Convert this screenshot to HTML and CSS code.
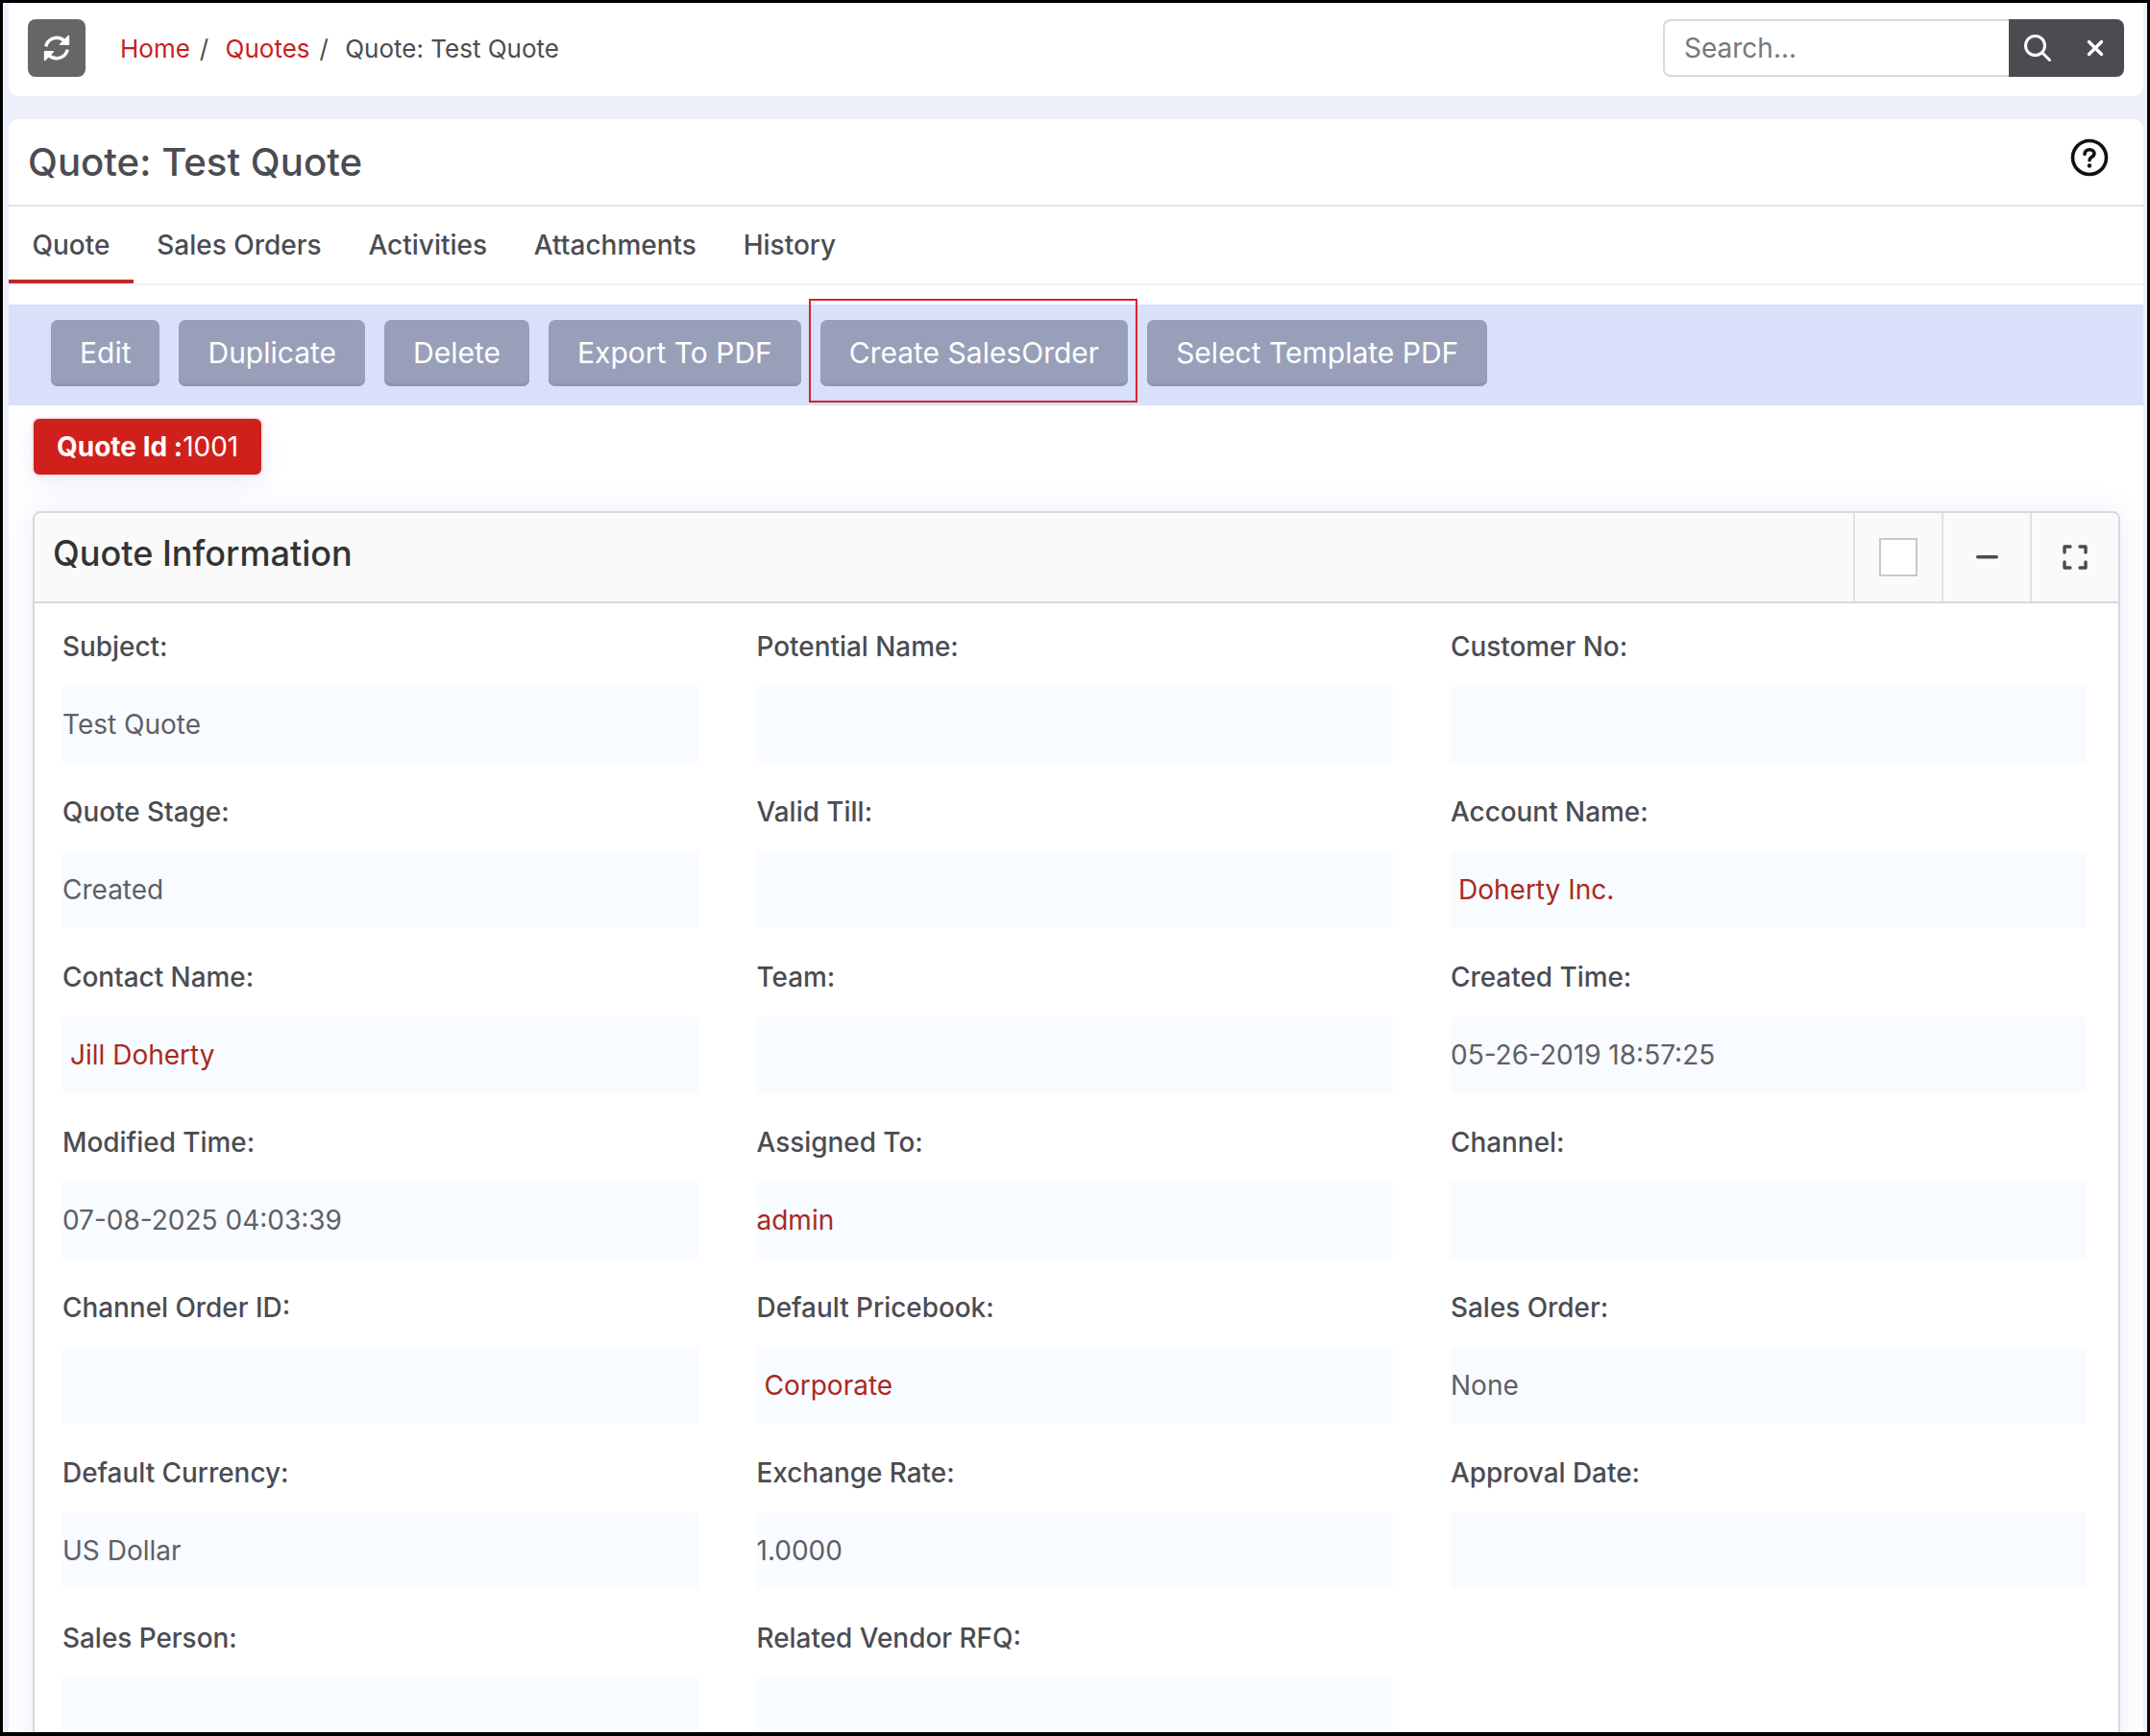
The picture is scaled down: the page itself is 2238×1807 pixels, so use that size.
FILE: index.html
```html
<!DOCTYPE html>
<html lang="en">

<head>
    <meta charset="UTF-8">
    <meta name="viewport" content="width=device-width, initial-scale=1.0">
    <title>Quote: Test Quote</title>
    <link rel="stylesheet" href="styles.css">
</head>

<body>

    <div class="page">
        <div class="topbar">
            <button class="refresh-btn" aria-label="Refresh">
                <svg width="30" height="30" viewBox="0 0 28 28" fill="none" stroke="#fff" stroke-width="3.2"><path d="M3.500 12.500A10.800 10.800 0 0 1 21.500 7"/><path d="M25.500 2.500v8h-8z" fill="#fff" stroke-width="1.600" stroke-linejoin="round"/><path d="M24.500 15.500A10.800 10.800 0 0 1 6.500 21"/><path d="M2.500 25.500v-8h8z" fill="#fff" stroke-width="1.600" stroke-linejoin="round"/></svg>
            </button>
            <nav class="breadcrumb">
                <a href="#">Home</a><span class="sep">/</span>
                <a href="#">Quotes</a><span class="sep">/</span>
                <span class="current">Quote: Test Quote</span>
            </nav>
            <div class="search">
                <input class="search-input" type="text" placeholder="Search...">
                <div class="search-btns">
                    <svg width="28" height="28" viewBox="0 0 28 28" fill="none" stroke="#fff" stroke-width="3" stroke-linecap="round"><circle cx="11.500" cy="11.500" r="10"/><path d="M19 19l7.500 7.500"/></svg>
                    <svg width="18" height="18" viewBox="0 0 18 18" fill="none" stroke="#fff" stroke-width="3.4" stroke-linecap="round"><path d="M2.500 2.500l13 13M15.500 2.500l-13 13"/></svg>
                </div>
            </div>
        </div>

        <div class="main">
            <div class="title-row">
                <h1>Quote: Test Quote</h1>
                <svg class="help" width="40" height="40" viewBox="0 0 40 40" fill="none" stroke="#111" stroke-width="3.6"><circle cx="20" cy="20" r="17.500"/><path d="M15 16.500c0-3 2.200-4.800 5-4.800s5 1.700 5 4.200c0 3.400-5 3.300-5 6.900" stroke-linecap="round"/><circle cx="20" cy="28.500" r="2.200" fill="#111" stroke="none"/></svg>
            </div>

            <div class="tabs">
                <a href="#" class="tab active">Quote</a>
                <a href="#" class="tab">Sales Orders</a>
                <a href="#" class="tab">Activities</a>
                <a href="#" class="tab">Attachments</a>
                <a href="#" class="tab">History</a>
            </div>

            <div class="actions">
                <button class="action-btn">Edit</button>
                <button class="action-btn">Duplicate</button>
                <button class="action-btn">Delete</button>
                <button class="action-btn">Export To PDF</button>
                <button class="action-btn highlighted">Create SalesOrder</button>
                <button class="action-btn">Select Template PDF</button>
            </div>

            <div class="quote-id"><b>Quote Id :</b>1001</div>

            <div class="panel">
                <div class="panel-head">
                    <h2>Quote Information</h2>
                    <div class="panel-tool"><span class="check"></span></div>
                    <div class="panel-tool">
                        <svg width="23" height="4" viewBox="0 0 23 4"><rect width="23" height="3.500" rx="1.750" fill="#4b4c52"/></svg>
                    </div>
                    <div class="panel-tool">
                        <svg width="26" height="26" viewBox="0 0 26 26" fill="none" stroke="#4b4c52" stroke-width="3.400" stroke-linecap="round" stroke-linejoin="round"><path d="M2 8V2h6M18 2h6v6M24 18v6h-6M8 24H2v-6"/></svg>
                    </div>
                </div>
                <div class="fields">
                    <div class="field"><label>Subject:</label><div class="value">Test Quote</div></div>
                    <div class="field"><label>Potential Name:</label><div class="value"></div></div>
                    <div class="field"><label>Customer No:</label><div class="value"></div></div>

                    <div class="field"><label>Quote Stage:</label><div class="value">Created</div></div>
                    <div class="field"><label>Valid Till:</label><div class="value"></div></div>
                    <div class="field"><label>Account Name:</label><div class="value"><a href="#" class="indent">Doherty Inc.</a></div></div>

                    <div class="field"><label>Contact Name:</label><div class="value"><a href="#" class="indent">Jill Doherty</a></div></div>
                    <div class="field"><label>Team:</label><div class="value"></div></div>
                    <div class="field"><label>Created Time:</label><div class="value">05-26-2019 18:57:25</div></div>

                    <div class="field"><label>Modified Time:</label><div class="value">07-08-2025 04:03:39</div></div>
                    <div class="field"><label>Assigned To:</label><div class="value"><a href="#">admin</a></div></div>
                    <div class="field"><label>Channel:</label><div class="value"></div></div>

                    <div class="field"><label>Channel Order ID:</label><div class="value"></div></div>
                    <div class="field"><label>Default Pricebook:</label><div class="value"><a href="#" class="indent">Corporate</a></div></div>
                    <div class="field"><label>Sales Order:</label><div class="value">None</div></div>

                    <div class="field"><label>Default Currency:</label><div class="value">US Dollar</div></div>
                    <div class="field"><label>Exchange Rate:</label><div class="value">1.0000</div></div>
                    <div class="field"><label>Approval Date:</label><div class="value"></div></div>

                    <div class="field"><label>Sales Person:</label><div class="value"></div></div>
                    <div class="field"><label>Related Vendor RFQ:</label><div class="value"></div></div>
                </div>
            </div>
        </div>
    </div>

</body>

</html>
```

FILE: styles.css
```css
html, body {
    margin: 0;
    height: 100%;
}

body {
    width: 2238px;
    height: 1807px;
    box-sizing: border-box;
    border: solid #000;
    border-width: 3px 3px 4px;
    overflow: hidden;
    font-family: Inter, "Noto Sans", sans-serif;
    font-size: 28px;
    color: #4b4c52;
}

a {
    text-decoration: none;
}

.page {
    height: 100%;
    padding: 0 4px 0 6px;
    background-color: #edf0fb;
    overflow: hidden;
}

/* top bar */
.topbar {
    display: flex;
    align-items: center;
    height: 97px;
    box-sizing: border-box;
    padding: 17px 20px 20px 20px;
    margin-bottom: 24px;
    background-color: #fff;
    border-radius: 0 0 10px 10px;
}

.refresh-btn {
    display: flex;
    align-items: center;
    justify-content: center;
    width: 60px;
    height: 60px;
    padding: 0;
    border: none;
    border-radius: 8px;
    background-color: #666;
}

.breadcrumb {
    flex: 1;
    margin-left: 36px;
    font-size: 26px;
    white-space: nowrap;
}

.breadcrumb a {
    color: #c71f1f;
}

.sep {
    margin: 0 10px;
}

.search {
    display: flex;
    height: 60px;
}

.search-input {
    width: 360px;
    box-sizing: border-box;
    padding: 0 20px;
    border: 2px solid #d8d8d8;
    border-right: none;
    border-radius: 8px 0 0 8px;
    font-family: inherit;
    font-size: 28px;
    outline: none;
}

.search-input::placeholder {
    color: #77787c;
}

.search-btns {
    display: flex;
    align-items: center;
    justify-content: space-between;
    width: 120px;
    box-sizing: border-box;
    padding: 0 21px 0 16px;
    background-color: #4b4c52;
    border-radius: 0 8px 8px 0;
}

/* main card */
.main {
    height: 1700px;
    background-color: #fff;
    border-radius: 10px 10px 0 0;
}

.title-row {
    display: flex;
    align-items: center;
    justify-content: space-between;
    height: 89px;
    padding: 0 36px 0 20px;
    border-bottom: 2px solid #e4e4e6;
}

.title-row h1 {
    margin: 0;
    font-size: 40.200px;
    font-weight: 500;
    color: #4b4c52;
}

.help {
    margin-top: -9px;
}

.tabs {
    display: flex;
    height: 82px;
    border-bottom: 2px solid #f1f2f6;
    box-sizing: border-box;
    margin-bottom: 20px;
}

.tab {
    display: flex;
    align-items: center;
    padding: 0 24.400px;
    color: #4b4c52;
    font-weight: 500;
}

.tab.active {
    box-shadow: inset 0 -4px 0 #c0282a;
}

.actions {
    display: flex;
    gap: 20px;
    height: 105px;
    box-sizing: border-box;
    padding: 16px 30px 20px 44px;
    background-color: #d8e0fa;
}

.action-btn {
    position: relative;
    padding: 0 30px 2px;
    border: none;
    border-radius: 7px;
    background-color: #98a0b9;
    box-shadow: inset 0 -3px 0 #8f97b0;
    color: #fff;
    font-family: inherit;
    font-size: 30px;
    white-space: nowrap;
}

/* red box that marks the button */
.action-btn.highlighted::after {
    content: "";
    position: absolute;
    top: -22px;
    bottom: -17px;
    left: -12px;
    right: -10px;
    border: 2px solid #d9232e;
}

.quote-id {
    display: inline-block;
    margin: 14px 0 1px 26px;
    padding: 0 24px;
    height: 58px;
    line-height: 58px;
    box-sizing: border-box;
    background-color: #d0201c;
    border-radius: 6px;
    box-shadow: 0 0 0 2px #f0e4e6, 0 8px 24px rgba(90, 110, 220, 0.14);
    color: #fff;
    font-size: 28px;
}

.quote-id b {
    font-weight: 700;
}

/* information panel */
.panel {
    margin: 37px 24px 0 25px;
    border: 2px solid #d8d8dc;
    border-radius: 8px 8px 0 0;
    box-shadow: 0 0 30px rgba(90, 110, 220, 0.12);
}

.panel-head {
    display: flex;
    align-items: stretch;
    height: 92px;
    border-bottom: 2px solid #d8d8dc;
    background-color: #fafafa;
    border-radius: 8px 8px 0 0;
}

.panel-head h2 {
    flex: 1;
    margin: 0;
    padding-left: 19px;
    font-size: 36.100px;
    font-weight: 500;
    line-height: 84px;
    color: #333;
}

.panel-tool {
    display: flex;
    align-items: center;
    justify-content: center;
    box-sizing: border-box;
    width: 92px;
    border-left: 2px solid #e2e2e4;
}

.check {
    width: 40px;
    height: 40px;
    box-sizing: border-box;
    border: 2px solid #c8c8c8;
    background-color: #fff;
}

.fields {
    display: grid;
    grid-template-columns: repeat(3, 1fr);
    column-gap: 60.500px;
    row-gap: 31px;
    padding: 25px 33px 0 29px;
    background-color: #fff;
}

.field label {
    display: block;
    height: 40px;
    line-height: 40px;
    margin-bottom: 21px;
    font-size: 27.900px;
    font-weight: 500;
    color: #4b4c52;
}

.value {
    height: 80px;
    line-height: 80px;
    background-color: #f8fbff;
    color: #5f6065;
}

.value a {
    color: #a82a22;
}

.value a.indent {
    margin-left: 8px;
}
```
